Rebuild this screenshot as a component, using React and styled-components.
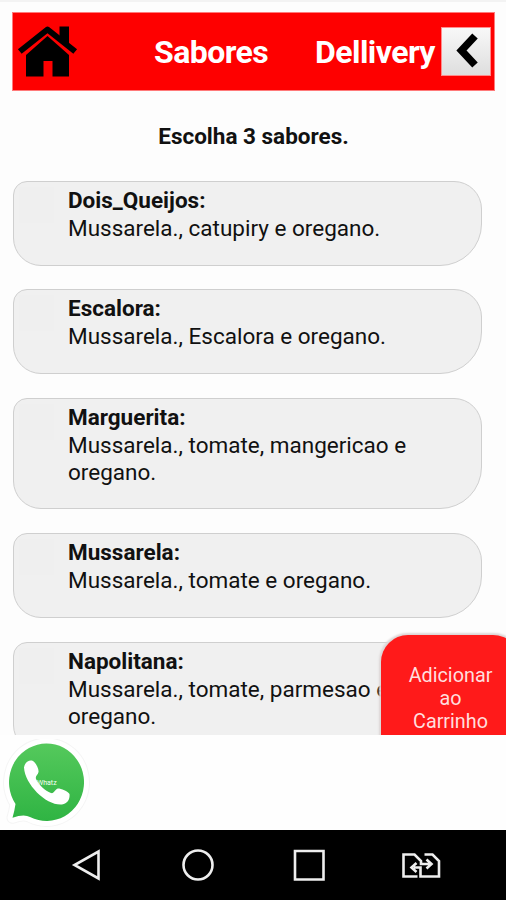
import React from "react";
import styled, { createGlobalStyle } from "styled-components";

const GlobalStyle = createGlobalStyle`
  * { box-sizing: border-box; }
  body { margin: 0; background: #fdfdfd; font-family: Roboto, sans-serif; color: #111; }
`;

const Screen = styled.div`
  display: flex;
  flex-direction: column;
  width: 506px;
  height: 900px;
  overflow: hidden;
  background: #fdfdfd;
`;

const Viewport = styled.main`
  position: relative;
  height: 735px;
  overflow: hidden;
  border-top: 2px solid #f3f3f3;
  padding: 10px 11px 0 12px;
`;

const Header = styled.header`
  display: flex;
  align-items: center;
  height: 79px;
  background: #fe0000;
  border: 1px solid #ff7a7a;
  padding: 0 3px 0 4px;
`;

const HomeIcon = styled.svg`
  width: 62px;
  height: 54px;
  flex: none;
`;

const Title = styled.h1`
  margin: 0 0 0 ${(p) => p.$gap}px;
  width: ${(p) => p.$width}px;
  flex: none;
  font-size: 32px;
  line-height: 36px;
  font-weight: 700;
  color: #fff;
  white-space: nowrap;
  letter-spacing: -0.55px;
`;

const BackButton = styled.button`
  display: flex;
  align-items: center;
  justify-content: center;
  margin: 0 0 0 auto;
  padding: 0;
  width: 50px;
  height: 49px;
  border: 1px solid #ff8b8b;
  background: linear-gradient(#f8f8f8, #dedede);
`;

const Prompt = styled.p`
  margin: 31px 0 31px;
  height: 28px;
  text-align: center;
  font-size: 22.5px;
  line-height: 28px;
  font-weight: 700;
`;

const FlavorList = styled.div`
  display: flex;
  flex-direction: column;
  gap: 23.8px;
  padding: 0 13px 0 1px;
`;

const FlavorCard = styled.article`
  display: flex;
  align-items: flex-start;
  gap: 14px;
  height: ${(p) => (p.$tall ? 111.9 : 84.5)}px;
  flex: none;
  border: 1.5px solid #cfcfcf;
  border-radius: 14px 28px 42px 28px;
  background: #f0f0f0;
  padding: 5.2px 0 0 5px;
`;

const FlavorToggle = styled.span`
  flex: none;
  width: 35px;
  height: 36px;
  background: #efefef;
`;

const FlavorBody = styled.div`
  font-size: 22.5px;
  line-height: 27.8px;
`;

const FlavorName = styled.h2`
  margin: 0;
  font-size: 22.5px;
  line-height: 27.8px;
  font-weight: 700;
`;

const FlavorText = styled.p`
  margin: 0;
  white-space: pre;
`;

const AddButton = styled.button`
  position: absolute;
  left: 381px;
  top: 633px;
  display: flex;
  justify-content: center;
  align-items: flex-start;
  width: 139px;
  height: 100px;
  padding: 29px 0 0;
  border: 0;
  border-radius: 27px 27px 0 0;
  background: #ff1a1a;
  box-shadow: 0 0 2px 1.5px #dcd6d6;
  color: #ffdede;
  font: 400 19.8px/23.2px Roboto, sans-serif;
  white-space: pre-line;
  text-align: center;
`;

const Footer = styled.footer`
  height: 95px;
  padding: 4px 0 0 3px;
  background: #fefefe;
`;

const WhatsAppLink = styled.a`
  display: block;
  position: relative;
  width: 88px;
  height: 90px;
`;

const WhatsAppLabel = styled.span`
  position: absolute;
  left: 34px;
  top: 39px;
  font-size: 7px;
  line-height: 10px;
  color: #f5fff5;
`;

const NavBar = styled.nav`
  display: grid;
  grid-template-columns: 33px 34px 34px 40px;
  column-gap: 77px;
  align-items: center;
  height: 70px;
  padding-left: 71px;
  background: #000;
`;

const NavIcon = styled.svg`
  width: 100%;
  height: 34px;
  overflow: visible;
  fill: none;
  stroke: #eee;
  stroke-width: 2.6;
`;

const flavors = [
  { name: "Dois_Queijos:", text: "Mussarela., catupiry e oregano." },
  { name: "Escalora:", text: "Mussarela., Escalora e oregano." },
  { name: "Marguerita:", text: "Mussarela., tomate, mangericao e\noregano.", tall: true },
  { name: "Mussarela:", text: "Mussarela., tomate e oregano." },
  { name: "Napolitana:", text: "Mussarela., tomate, parmesao e\noregano.", tall: true },
];

const bubble = "M15.500 804A37.500 38.700 0 1 1 30 817Q24 813.500 12.500 817.800Q14.500 811 15.500 804Z";

export default function App() {
  return (
    <Screen>
      <GlobalStyle />
      <Viewport>
        <Header>
          <HomeIcon viewBox="0 0 62 54">
            <path d="M2.800 26.500 30.500 4.500 58.200 26.500" fill="none" stroke="#000" strokeWidth="6" strokeLinejoin="round" />
            <path d="M42.500 1.500h9.500v21L42.500 14.500z" />
            <path d="M30.500 11 52 30v21.500H35.500V36h-9v15.500H9V30z" />
          </HomeIcon>
          <Title $gap={75} $width={161}>Sabores</Title>
          <Title $gap={0} $width={122}>Dellivery</Title>
          <BackButton aria-label="Voltar">
            <svg width="28" height="38" viewBox="0 0 28 38">
              <path d="M23 3 9.500 17.500 23 32" fill="none" stroke="#000" strokeWidth="7.500" />
            </svg>
          </BackButton>
        </Header>
        <Prompt>Escolha 3 sabores.</Prompt>
        <FlavorList>
          {flavors.map((f) => (
            <FlavorCard key={f.name} $tall={f.tall}>
              <FlavorToggle />
              <FlavorBody>
                <FlavorName>{f.name}</FlavorName>
                <FlavorText>{f.text}</FlavorText>
              </FlavorBody>
            </FlavorCard>
          ))}
        </FlavorList>
        <AddButton>{"Adicionar\nao\nCarrinho"}</AddButton>
      </Viewport>
      <Footer>
        <WhatsAppLink>
          <svg width="88" height="90" viewBox="3 739 88 90">
            <defs>
              <linearGradient id="leaf" x1="0" y1="0" x2="0" y2="1">
                <stop offset="0" stopColor="#55c95c" />
                <stop offset="1" stopColor="#2fb443" />
              </linearGradient>
            </defs>
            <path d={bubble} fill="#fff" stroke="#f5f5f5" strokeWidth="12" strokeLinejoin="round" />
            <path d={bubble} fill="#fff" stroke="#fff" strokeWidth="10" strokeLinejoin="round" />
            <path d={bubble} fill="url(#leaf)" />
            <path d="M24 767.500C25 762 29 759.500 33 761C36 763 39 769 38.500 772C38 775 35 776 36 779C39 785 45 791 51 793C54 794 55 789 58 788.500C61 788.500 68 791 69.500 794C70 799 68 803 62 804.500C47 806 25 785 24 767.500Z" fill="#fff" />
          </svg>
          <WhatsAppLabel>Whatz</WhatsAppLabel>
        </WhatsAppLink>
      </Footer>
      <NavBar>
        <NavIcon viewBox="0 0 33 34"><path d="M27.500 3.500v27L3.500 17z" /></NavIcon>
        <NavIcon viewBox="0 0 34 34"><circle cx="17" cy="17" r="14.500" /></NavIcon>
        <NavIcon viewBox="0 0 34 34"><path d="M3 3h28.500v28.500H3z" /></NavIcon>
        <NavIcon viewBox="2.500 0 40 34">
          <path d="M17 28.500H3V6.500h11l6.500 6.500v3h9M26 11.500l5 4.500-5 4.500M24 6.500h8l6.500 6.500v15.500H20v-9h-7M16 15l-5 4.500 5 4.500" />
        </NavIcon>
      </NavBar>
    </Screen>
  );
}
